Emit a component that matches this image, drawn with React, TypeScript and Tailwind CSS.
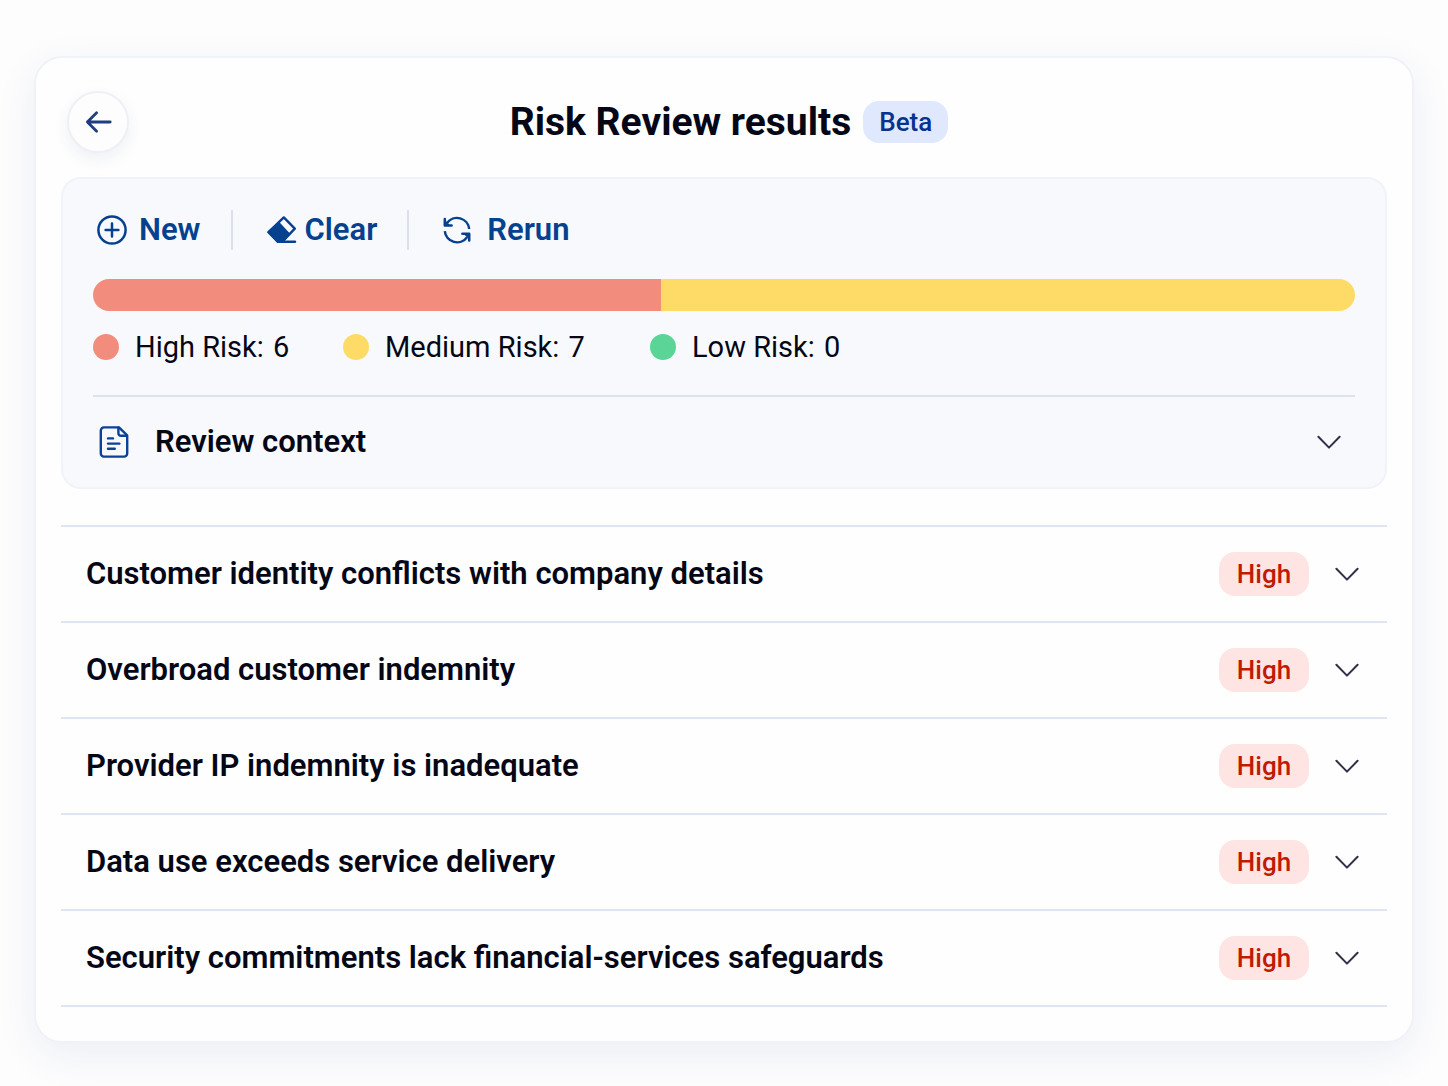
import { useState } from 'react'

type Level = 'High' | 'Medium' | 'Low'

interface Risk {
  id: number
  title: string
  level: Level
}

const risks: Risk[] = [
  { id: 1, title: 'Customer identity conflicts with company details', level: 'High' },
  { id: 2, title: 'Overbroad customer indemnity', level: 'High' },
  { id: 3, title: 'Provider IP indemnity is inadequate', level: 'High' },
  { id: 4, title: 'Data use exceeds service delivery', level: 'High' },
  { id: 5, title: 'Security commitments lack financial-services safeguards', level: 'High' },
]

const summary = [
  { label: 'High Risk:', count: 6, share: 45, color: 'bg-[#f28d7e]' },
  { label: 'Medium Risk:', count: 7, share: 55, color: 'bg-[#fedb67]' },
  { label: 'Low Risk:', count: 0, share: 0, color: 'bg-[#5bd597]' },
]

const levelStyles: Record<Level, string> = {
  High: 'bg-[#fee4e2] text-[#c01a00]',
  Medium: 'bg-amber-100 text-amber-700',
  Low: 'bg-green-100 text-green-700',
}

function ArrowLeftIcon() {
  return (
    <svg width="28" height="24" viewBox="0 0 28 24" fill="none" stroke="#1f3d80" strokeWidth="2.8" strokeLinecap="round" strokeLinejoin="round">
      <path d="M26.2 12H3.4M12.6 2.8 3.4 12l9.2 9.2" />
    </svg>
  )
}

function PlusCircleIcon() {
  return (
    <svg width="30" height="30" viewBox="0 0 30 30" fill="none" stroke="currentColor" strokeWidth="2.5" strokeLinecap="round">
      <circle cx="15" cy="15" r="13.6" />
      <path d="M15 8.6v12.8M8.6 15h12.8" />
    </svg>
  )
}

function EraserIcon() {
  return (
    <svg width="30" height="30" viewBox="0 0 30 30" fill="none" stroke="currentColor" strokeWidth="2.4" strokeLinecap="round" strokeLinejoin="round">
      <path d="M16.8 2.4 27.8 13.6 15.4 26.6h-4.6L1.6 17.2z" />
      <path d="M11.8 8.2 21.8 19 15.4 26.6h-4.6L1.6 17.2z" fill="currentColor" />
      <path d="M11 26.8h17" />
    </svg>
  )
}

function RerunIcon() {
  return (
    <svg width="28" height="30" viewBox="0 0 28 30" fill="none" stroke="currentColor" strokeWidth="2.5" strokeLinecap="round" strokeLinejoin="round">
      <path d="M26.2 14A12.3 12.3 0 0 0 4 8" strokeLinecap="butt" />
      <path d="M1.8 4v6.6h6.8" />
      <path d="M1.8 5.4 6.8 10.6h-5z" fill="currentColor" strokeWidth="1" />
      <path d="M1.8 16.2A12.3 12.3 0 0 0 24 22.2" strokeLinecap="butt" />
      <path d="M26.2 25.4v-6.6h-6.8" />
      <path d="m26.2 24-5-5.2h5z" fill="currentColor" strokeWidth="1" />
    </svg>
  )
}

function DocumentIcon() {
  return (
    <svg width="30" height="32" viewBox="0 0 30 32" fill="none" stroke="#0b4296" strokeWidth="2.4" strokeLinecap="round" strokeLinejoin="round">
      <path d="M20 1.4H5A3.2 3.2 0 0 0 1.8 4.6v22.8A3.2 3.2 0 0 0 5 30.6h20a3.2 3.2 0 0 0 3.2-3.2V9.4z" />
      <path d="M19.4 1.8v5.4a2.6 2.6 0 0 0 2.6 2.6h5.6" />
      <path d="M9 12.4h5M9 17.6h11.4M9 22.8h6.8" />
    </svg>
  )
}

function ChevronIcon() {
  return (
    <svg width="24" height="14" viewBox="0 0 24 14" fill="none" stroke="#2e3148" strokeWidth="2" strokeLinecap="round" strokeLinejoin="round">
      <path d="M1.4 1.8 12 12.6 22.6 1.8" />
    </svg>
  )
}

const actions = [
  { label: 'New', icon: <PlusCircleIcon />, gap: 'gap-3' },
  { label: 'Clear', icon: <EraserIcon />, gap: 'gap-2' },
  { label: 'Rerun', icon: <RerunIcon />, gap: 'gap-4' },
]

export default function App() {
  const [openId, setOpenId] = useState<number | null>(null)
  const [contextOpen, setContextOpen] = useState(false)

  return (
    <div className="min-h-screen bg-[#fdfdfe] px-[34px] pt-14 pb-10 font-['Roboto',sans-serif] text-[#050716]">
      <main className="rounded-[28px] border-2 border-[#f0f2f8] bg-[#fefefe] px-[25px] pt-[33px] pb-[34px] shadow-[0_12px_40px_rgba(30,60,110,0.08)]">
        <header className="grid grid-cols-[62px_1fr_52px] items-center px-1.5">
          <button
            aria-label="Back"
            className="flex size-[62px] items-center justify-center rounded-full border-2 border-[#eff0f6] bg-[#fdfdfe] shadow-[0_6px_16px_rgba(30,60,110,0.07)]"
          >
            <ArrowLeftIcon />
          </button>
          <div className="flex items-center justify-center gap-3">
            <h1 className="text-[39px] leading-[44px] font-bold">Risk Review results</h1>
            <span className="rounded-2xl bg-[#e0e8fd] px-4 py-1 text-[26px] leading-[34px] font-medium text-[#07338f]">Beta</span>
          </div>
        </header>

        <section className="mt-6 rounded-[20px] border-2 border-[#f0f3f8] bg-[#f7f9fc] px-[30px] pt-[31px]">
          <div className="flex h-10 items-center gap-[30px] px-1">
            {actions.map(({ label, icon, gap }, i) => (
              <div key={label} className="flex h-full items-center gap-[34px]">
                {i > 0 && <span className="h-full w-0.5 bg-[#dbe1ec]" />}
                <button className={`flex items-center text-[31px] leading-10 font-semibold text-[#06418f] ${gap}`}>
                  {icon}
                  {label}
                </button>
              </div>
            ))}
          </div>

          <div className="mt-[29px] flex h-8 overflow-hidden rounded-full">
            {summary.map(({ label, share, color }) => (
              <div key={label} className={color} style={{ width: `${share}%` }} />
            ))}
          </div>

          <ul className="mt-4 grid grid-cols-[250px_307px_1fr] text-[29px] leading-10">
            {summary.map(({ label, count, color }) => (
              <li key={label} className="flex items-center gap-4">
                <span className={`size-[26px] rounded-full ${color}`} />
                <span>
                  {label} <span className="ml-0.5">{count}</span>
                </span>
              </li>
            ))}
          </ul>

          <button
            aria-expanded={contextOpen}
            onClick={() => setContextOpen(!contextOpen)}
            className="mt-7 flex h-[92px] w-full items-center border-t-2 border-[#dde3ed] pr-3.5 pl-1.5 text-left"
          >
            <DocumentIcon />
            <span className="ml-[26px] flex-1 text-[31px] leading-10 font-semibold">Review context</span>
            <ChevronIcon />
          </button>
        </section>

        <ul className="mt-9 border-t-2 border-[#e0e4ee]">
          {risks.map(({ id, title, level }) => (
            <li key={id} className="border-b-2 border-[#e0e4ee]">
              <button
                aria-expanded={openId === id}
                onClick={() => setOpenId(openId === id ? null : id)}
                className="flex h-[94px] w-full items-center pr-7 pl-[25px] text-left"
              >
                <span className="flex-1 text-[31px] leading-10 font-semibold">{title}</span>
                <span className={`w-[90px] rounded-2xl text-center text-[26px] leading-[44px] font-medium ${levelStyles[level]}`}>
                  {level}
                </span>
                <span className="ml-[26px]">
                  <ChevronIcon />
                </span>
              </button>
            </li>
          ))}
        </ul>
      </main>
    </div>
  )
}
